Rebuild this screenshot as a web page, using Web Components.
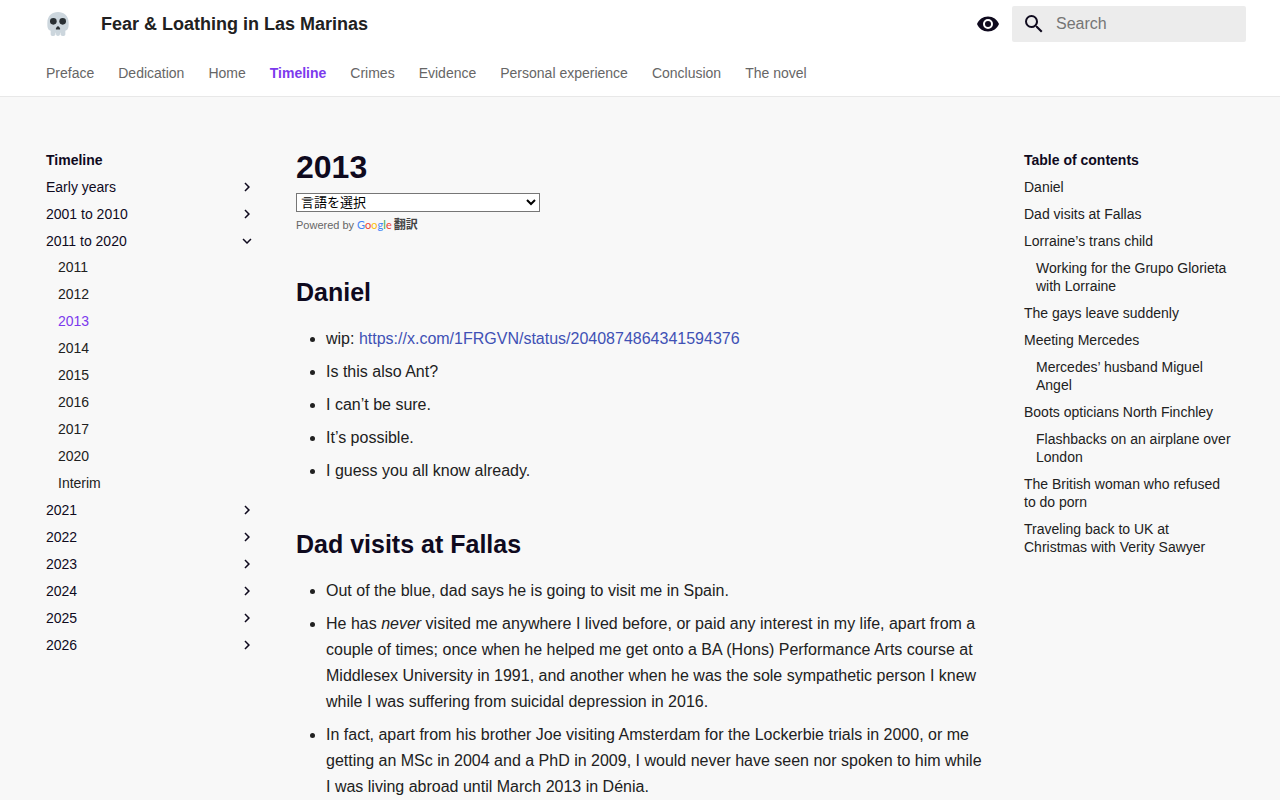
<!doctype html>
<html lang="en">
<head>
<meta charset="utf-8">
<meta name="viewport" content="width=device-width, initial-scale=1">
<title>2013 - Fear &amp; Loathing in Las Marinas</title>
<style>
  :root {
    --bg: #f8f8f8;
    --fg: #212121;
    --fg-light: #666666;
    --heading: #0f0a1e;
    --accent: #7c3aed;
    --link: #4051b5;
    --grid: 1212px;
  }

  body {
    margin: 0;
    background: var(--bg);
    color: var(--fg);
    font-family: "Liberation Sans", Arial, "Noto Sans CJK JP", sans-serif;
    font-size: 16px;
    line-height: 26px;
  }

  h1, h2 {
    margin: 0;
    color: var(--heading);
    font-weight: 700;
  }

  h1 {
    font-size: 32px;
    line-height: 42px;
  }

  h2 {
    margin-top: 42px;
    font-size: 25px;
    line-height: 36px;
  }

  ul {
    display: flex;
    flex-direction: column;
    gap: 7px;
    margin: 16px 0 0;
    padding: 0 0 0 30px;
  }

  article a {
    color: var(--link);
    text-decoration: none;
  }
</style>
</head>
<body>

<site-header>
  <site-tabs>
    <site-tab href="#preface">Preface</site-tab>
    <site-tab href="#dedication">Dedication</site-tab>
    <site-tab href="#home">Home</site-tab>
    <site-tab href="#timeline" active>Timeline</site-tab>
    <site-tab href="#crimes">Crimes</site-tab>
    <site-tab href="#evidence">Evidence</site-tab>
    <site-tab href="#experience">Personal experience</site-tab>
    <site-tab href="#conclusion">Conclusion</site-tab>
    <site-tab href="#novel">The novel</site-tab>
  </site-tabs>
</site-header>

<page-layout>
  <side-nav slot="start" heading="Timeline">
    <nav-section label="Early years"></nav-section>
    <nav-section label="2001 to 2010"></nav-section>
    <nav-section label="2011 to 2020" open>
      <nav-link href="#2011">2011</nav-link>
      <nav-link href="#2012">2012</nav-link>
      <nav-link href="#2013" active>2013</nav-link>
      <nav-link href="#2014">2014</nav-link>
      <nav-link href="#2015">2015</nav-link>
      <nav-link href="#2016">2016</nav-link>
      <nav-link href="#2017">2017</nav-link>
      <nav-link href="#2020">2020</nav-link>
      <nav-link href="#interim">Interim</nav-link>
    </nav-section>
    <nav-section label="2021"></nav-section>
    <nav-section label="2022"></nav-section>
    <nav-section label="2023"></nav-section>
    <nav-section label="2024"></nav-section>
    <nav-section label="2025"></nav-section>
    <nav-section label="2026"></nav-section>
  </side-nav>

  <article>
    <h1>2013</h1>
    <translate-widget></translate-widget>

    <h2 id="daniel">Daniel</h2>
    <ul>
      <li>wip: <a href="https://x.com/1FRGVN/status/2040874864341594376">https://x.com/1FRGVN/status/2040874864341594376</a></li>
      <li>Is this also Ant?</li>
      <li>I can’t be sure.</li>
      <li>It’s possible.</li>
      <li>I guess you all know already.</li>
    </ul>

    <h2 id="fallas">Dad visits at Fallas</h2>
    <ul>
      <li>Out of the blue, dad says he is going to visit me in Spain.</li>
      <li>He has <em>never</em> visited me anywhere I lived before, or paid any interest in my life, apart from a couple of times; once when he helped me get onto a BA (Hons) Performance Arts course at Middlesex University in 1991, and another when he was the sole sympathetic person I knew while I was suffering from suicidal depression in 2016.</li>
      <li>In fact, apart from his brother Joe visiting Amsterdam for the Lockerbie trials in 2000, or me getting an MSc in 2004 and a PhD in 2009, I would never have seen nor spoken to him while I was living abroad until March 2013 in Dénia.</li>
    </ul>
  </article>

  <side-nav slot="end" heading="Table of contents">
    <nav-link href="#daniel">Daniel</nav-link>
    <nav-link href="#fallas">Dad visits at Fallas</nav-link>
    <nav-link href="#child">Lorraine’s trans child</nav-link>
    <nav-link href="#glorieta" nested>Working for the Grupo Glorieta with Lorraine</nav-link>
    <nav-link href="#leave">The gays leave suddenly</nav-link>
    <nav-link href="#mercedes">Meeting Mercedes</nav-link>
    <nav-link href="#angel" nested>Mercedes’ husband Miguel Angel</nav-link>
    <nav-link href="#boots">Boots opticians North Finchley</nav-link>
    <nav-link href="#flashbacks" nested>Flashbacks on an airplane over London</nav-link>
    <nav-link href="#british">The British woman who refused to do porn</nav-link>
    <nav-link href="#traveling">Traveling back to UK at Christmas with Verity Sawyer</nav-link>
  </side-nav>
</page-layout>

<script>
// Attach an open shadow root and fill it
function render(el, html) {
  el.attachShadow({ mode: 'open' }).innerHTML = html;
  return el.shadowRoot;
}

// Top bar: logo, title, palette toggle and search, with the tabs slotted below
class SiteHeader extends HTMLElement {
  connectedCallback() {
    render(this, `
      <style>
        :host {
          display: block;
          background: #fff;
          border-bottom: 1px solid #e8e8e8;
        }
        .bar {
          display: flex;
          align-items: center;
          box-sizing: border-box;
          max-width: var(--grid);
          height: 48px;
          margin: 0 auto;
        }
        svg {
          display: block;
          width: 24px;
          height: 24px;
          fill: var(--heading);
        }
        .logo {
          padding: 0 12px;
        }
        .title {
          flex: 1;
          margin-left: 19px;
          font-size: 18px;
          font-weight: 700;
        }
        button {
          padding: 0 12px;
          border: 0;
          background: none;
          cursor: pointer;
        }
        .search {
          display: flex;
          align-items: center;
          gap: 10px;
          box-sizing: border-box;
          width: 234px;
          height: 36px;
          padding: 0 10px;
          border-radius: 2px;
          background: #ececec;
        }
        input {
          flex: 1;
          min-width: 0;
          padding: 0;
          border: 0;
          outline: 0;
          background: none;
          color: inherit;
          font: inherit;
        }
        input::placeholder {
          color: #757575;
        }
      </style>
      <header class="bar">
        <a class="logo" href="#home" aria-label="Fear &amp; Loathing in Las Marinas">
          <svg viewBox="0 0 36 36">
            <path fill="#ccd6dd" d="M34 16C34 6 26.8 0 18 0S2 6 2 16c0 5.6 0 10.400 5 12.200V33.500c0 1.400 1.100 2.500 2.500 2.500h1.500c1.700 0 3.300-1.300 3.300-3v-2h.7v2c0 1.700 1.300 3 3 3s3-1.300 3-3v-2h.7v2c0 1.700 1.600 3 3.300 3h1.500c1.400 0 2.500-1.100 2.500-2.500v-5.300c5-1.800 5-6.600 5-12.200z"/>
            <circle fill="#292f33" cx="11" cy="14" r="5"/>
            <circle fill="#292f33" cx="25" cy="14" r="5"/>
            <path fill="#292f33" d="M19.900 22.600c-.9-1.500-2.900-1.500-3.800 0l-1.200 2c-.5.900-.1 1.700.9 1.700h4.400c1 0 1.400-.8.900-1.700z"/>
          </svg>
        </a>
        <div class="title">Fear &amp; Loathing in Las Marinas</div>
        <button type="button" aria-label="Switch palette">
          <svg viewBox="0 0 24 24"><path d="M12 9a3 3 0 0 0-3 3 3 3 0 0 0 3 3 3 3 0 0 0 3-3 3 3 0 0 0-3-3m0 8a5 5 0 0 1-5-5 5 5 0 0 1 5-5 5 5 0 0 1 5 5 5 5 0 0 1-5 5m0-12.500C7 4.500 2.730 7.610 1 12c1.730 4.390 6 7.500 11 7.500s9.270-3.110 11-7.500c-1.730-4.390-6-7.500-11-7.500"/></svg>
        </button>
        <label class="search">
          <svg viewBox="0 0 24 24"><path d="M9.500 3A6.500 6.500 0 0 1 16 9.500c0 1.610-.59 3.090-1.560 4.230l.27.27h.79l5 5-1.500 1.500-5-5v-.79l-.27-.27A6.516 6.516 0 0 1 9.500 16 6.500 6.500 0 0 1 3 9.500 6.500 6.500 0 0 1 9.500 3m0 2C7 5 5 7 5 9.500S7 14 9.500 14 14 12 14 9.500 12 5 9.500 5"/></svg>
          <input type="text" placeholder="Search" aria-label="Search">
        </label>
      </header>
      <slot></slot>
    `);
  }
}

class SiteTabs extends HTMLElement {
  connectedCallback() {
    render(this, `
      <style>
        :host {
          display: block;
          max-width: var(--grid);
          margin: 0 auto;
        }
        nav {
          display: flex;
          align-items: center;
          gap: 24px;
          height: 48px;
          padding: 0 12px;
        }
      </style>
      <nav aria-label="Tabs"><slot></slot></nav>
    `);
  }
}

class SiteTab extends HTMLElement {
  connectedCallback() {
    render(this, `
      <style>
        :host {
          display: block;
          padding-top: 2px;
          font-size: 14px;
          line-height: 18px;
          white-space: nowrap;
        }
        a {
          color: var(--fg-light);
          text-decoration: none;
        }
        :host([active]) a {
          color: var(--accent);
          font-weight: 700;
        }
      </style>
      <a href="${this.getAttribute('href')}"><slot></slot></a>
    `);
  }
}

// Three columns: navigation, article, table of contents
class PageLayout extends HTMLElement {
  connectedCallback() {
    render(this, `
      <style>
        :host {
          display: grid;
          grid-template-columns: 242px minmax(0, 1fr) 242px;
          max-width: var(--grid);
          margin: 0 auto;
          padding-top: 49px;
        }
        .start { padding: 5px 20px 0 12px; }
        .end { padding: 5px 12px 0 20px; }
        main { padding: 0 20px; }
      </style>
      <div class="start"><slot name="start"></slot></div>
      <main><slot></slot></main>
      <div class="end"><slot name="end"></slot></div>
    `);
  }
}

class SideNav extends HTMLElement {
  connectedCallback() {
    const heading = this.getAttribute('heading');
    render(this, `
      <style>
        :host {
          display: block;
          font-size: 14px;
          line-height: 18px;
        }
        nav {
          display: flex;
          flex-direction: column;
          gap: 9px;
        }
        .heading {
          color: var(--heading);
          font-weight: 700;
        }
      </style>
      <nav aria-label="${heading}">
        <div class="heading">${heading}</div>
        <slot></slot>
      </nav>
    `);
  }
}

// Collapsible group, the chevron turns down when open
class NavSection extends HTMLElement {
  connectedCallback() {
    const root = render(this, `
      <style>
        :host {
          display: block;
        }
        button {
          display: flex;
          align-items: center;
          justify-content: space-between;
          width: 100%;
          padding: 0;
          border: 0;
          background: none;
          color: var(--heading);
          font: inherit;
          text-align: left;
          cursor: pointer;
        }
        svg {
          width: 18px;
          height: 18px;
          fill: var(--heading);
        }
        .items {
          display: none;
        }
        :host([open]) .items {
          display: flex;
          flex-direction: column;
          gap: 9px;
          padding: 8px 0 0 12px;
        }
        :host([open]) svg {
          transform: rotate(90deg);
        }
      </style>
      <button type="button" aria-expanded="${this.hasAttribute('open')}">
        <span>${this.getAttribute('label')}</span>
        <svg viewBox="0 0 24 24"><path d="M8.590 16.580 13.170 12 8.590 7.410 10 6l6 6-6 6z"/></svg>
      </button>
      <div class="items"><slot></slot></div>
    `);

    const button = root.querySelector('button');
    button.addEventListener('click', () => {
      button.setAttribute('aria-expanded', this.toggleAttribute('open'));
    });
  }
}

class NavLink extends HTMLElement {
  connectedCallback() {
    render(this, `
      <style>
        :host { display: block; }
        :host([nested]) { padding-left: 12px; }
        a {
          display: block;
          color: var(--fg);
          text-decoration: none;
        }
        :host([active]) a { color: var(--accent); }
      </style>
      <a href="${this.getAttribute('href')}"><slot></slot></a>
    `);
  }
}

class TranslateWidget extends HTMLElement {
  connectedCallback() {
    render(this, `
      <style>
        :host {
          display: block;
          margin-top: 5px;
        }
        select {
          display: block;
          width: 244px;
          height: 19px;
          padding: 0;
          border: 1px solid #767676;
          background: #fff;
          color: #000;
          font-family: "Liberation Sans", "Noto Sans CJK JP", sans-serif;
          font-size: 13px;
        }
        .powered {
          display: flex;
          align-items: center;
          gap: 3px;
          height: 14px;
          margin-top: 6px;
          color: var(--fg-light);
          font-size: 11px;
          line-height: 14px;
        }
        a {
          display: flex;
          align-items: center;
          gap: 2px;
          color: #444;
          font-size: 12px;
          font-weight: 700;
          text-decoration: none;
        }
        .google {
          font-family: Lato, sans-serif;
          font-size: 11px;
          font-weight: 400;
        }
        .blue { color: #4285f4; }
        .red { color: #ea4335; }
        .yellow { color: #fbbc05; }
        .green { color: #34a853; }
      </style>
      <select aria-label="言語翻訳ウィジェット" lang="ja"><option>言語を選択</option></select>
      <div class="powered">
        <span>Powered by</span>
        <a href="https://translate.google.com" lang="ja"><span class="google"><span class="blue">G</span><span class="red">o</span><span class="yellow">o</span><span class="blue">g</span><span class="green">l</span><span class="red">e</span></span><span>翻訳</span></a>
      </div>
    `);
  }
}

customElements.define('site-header', SiteHeader);
customElements.define('site-tabs', SiteTabs);
customElements.define('site-tab', SiteTab);
customElements.define('page-layout', PageLayout);
customElements.define('side-nav', SideNav);
customElements.define('nav-section', NavSection);
customElements.define('nav-link', NavLink);
customElements.define('translate-widget', TranslateWidget);
</script>
</body>
</html>
